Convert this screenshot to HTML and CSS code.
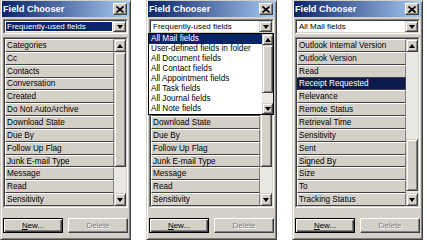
FILE: index.html
```html
<!DOCTYPE html>
<html lang="en">
<head>
  <meta charset="UTF-8">
  <title>Field Chooser</title>
  <link rel="stylesheet" href="styles.css">
</head>
<body>

  <div class="desk">

    <!-- 1: frequently-used fields, combo focused -->
    <div class="win">
      <div class="title">
        <span>Field Chooser</span>
        <span class="close"><svg width="8" height="7" viewBox="0 0 8 7"><path d="M0.5 0.5L7.5 6.5M7.5 0.5L0.5 6.5" stroke="#000" stroke-width="1.7"/></svg></span>
      </div>
      <div class="combo">
        <div class="combo-in">
          <span class="value sel">Frequently-used fields</span>
          <span class="arrow"><i class="tri down"></i></span>
        </div>
      </div>
      <div class="list">
        <div class="list-in">
          <div class="items">
            <div class="item">Categories</div>
            <div class="item">Cc</div>
            <div class="item">Contacts</div>
            <div class="item">Conversation</div>
            <div class="item">Created</div>
            <div class="item">Do Not AutoArchive</div>
            <div class="item">Download State</div>
            <div class="item">Due By</div>
            <div class="item">Follow Up Flag</div>
            <div class="item">Junk E-mail Type</div>
            <div class="item">Message</div>
            <div class="item">Read</div>
            <div class="item">Sensitivity</div>
          </div>
          <div class="sbar">
            <div class="sbtn"><i class="tri up"></i></div>
            <div class="track"><div class="thumb thumb-top"></div></div>
            <div class="sbtn"><i class="tri down"></i></div>
          </div>
        </div>
      </div>
      <div class="btns">
        <button class="btn default"><u>N</u>ew...</button>
        <button class="btn" disabled>Delete</button>
      </div>
    </div>

    <!-- 2: combo dropped down -->
    <div class="win">
      <div class="title">
        <span>Field Chooser</span>
        <span class="close"><svg width="8" height="7" viewBox="0 0 8 7"><path d="M0.5 0.5L7.5 6.5M7.5 0.5L0.5 6.5" stroke="#000" stroke-width="1.7"/></svg></span>
      </div>
      <div class="combo">
        <div class="combo-in">
          <span class="value">Frequently-used fields</span>
          <span class="arrow"><i class="tri down"></i></span>
        </div>
      </div>
      <div class="list">
        <div class="list-in">
          <div class="items">
            <div class="item">Categories</div>
            <div class="item">Cc</div>
            <div class="item">Contacts</div>
            <div class="item">Conversation</div>
            <div class="item">Created</div>
            <div class="item">Do Not AutoArchive</div>
            <div class="item">Download State</div>
            <div class="item">Due By</div>
            <div class="item">Follow Up Flag</div>
            <div class="item">Junk E-mail Type</div>
            <div class="item">Message</div>
            <div class="item">Read</div>
            <div class="item">Sensitivity</div>
          </div>
          <div class="sbar">
            <div class="sbtn"><i class="tri up"></i></div>
            <div class="track"><div class="thumb thumb-top"></div></div>
            <div class="sbtn"><i class="tri down"></i></div>
          </div>
        </div>
      </div>
      <div class="btns">
        <button class="btn default"><u>N</u>ew...</button>
        <button class="btn" disabled>Delete</button>
      </div>

      <div class="dropdown">
        <div class="drop-items">
          <div class="drop-item hi">All Mail fields</div>
          <div class="drop-item">User-defined fields in folder</div>
          <div class="drop-item">All Document fields</div>
          <div class="drop-item">All Contact fields</div>
          <div class="drop-item">All Appointment fields</div>
          <div class="drop-item">All Task fields</div>
          <div class="drop-item">All Journal fields</div>
          <div class="drop-item">All Note fields</div>
        </div>
        <div class="sbar small">
          <div class="sbtn"><i class="tri up"></i></div>
          <div class="track"><div class="thumb thumb-drop"></div></div>
          <div class="sbtn"><i class="tri down"></i></div>
        </div>
      </div>
    </div>

    <!-- 3: all mail fields -->
    <div class="win">
      <div class="title">
        <span>Field Chooser</span>
        <span class="close"><svg width="8" height="7" viewBox="0 0 8 7"><path d="M0.5 0.5L7.5 6.5M7.5 0.5L0.5 6.5" stroke="#000" stroke-width="1.7"/></svg></span>
      </div>
      <div class="combo">
        <div class="combo-in">
          <span class="value">All Mail fields</span>
          <span class="arrow"><i class="tri down"></i></span>
        </div>
      </div>
      <div class="list">
        <div class="list-in">
          <div class="items">
            <div class="item">Outlook Internal Version</div>
            <div class="item">Outlook Version</div>
            <div class="item">Read</div>
            <div class="item picked">Receipt Requested</div>
            <div class="item">Relevance</div>
            <div class="item">Remote Status</div>
            <div class="item">Retrieval Time</div>
            <div class="item">Sensitivity</div>
            <div class="item">Sent</div>
            <div class="item">Signed By</div>
            <div class="item">Size</div>
            <div class="item">To</div>
            <div class="item">Tracking Status</div>
          </div>
          <div class="sbar">
            <div class="sbtn"><i class="tri up"></i></div>
            <div class="track"><div class="thumb thumb-low"></div></div>
            <div class="sbtn"><i class="tri down"></i></div>
          </div>
        </div>
      </div>
      <div class="btns">
        <button class="btn default"><u>N</u>ew...</button>
        <button class="btn" disabled>Delete</button>
      </div>
    </div>

  </div>

</body>
</html>
```

FILE: styles.css
```css
* {
  box-sizing: border-box;
}

body {
  margin: 0;
  background: #fff;
  font-family: "Liberation Sans", Arial, sans-serif;
  font-size: 8px;
  color: #000;
}

.desk {
  display: flex;
  gap: 15px;
}

/* window frame, win2000 classic */
.win {
  position: relative;
  width: 131px;
  height: 240px;
  background: #d4d0c8;
  border: 1px solid;
  border-color: #d4d0c8 #404040 #404040 #d4d0c8;
  box-shadow: inset 1px 1px #fff, inset -1px -1px #808080;
  padding: 0 1px;
  display: flex;
  flex-direction: column;
}

.title {
  height: 16px;
  background: linear-gradient(to right, #0a246a, #a6caf0);
  color: #fff;
  font-weight: bold;
  font-size: 9.2px;
  display: flex;
  align-items: center;
  justify-content: space-between;
  padding: 0 2px 0 1px;
}

.close {
  width: 14px;
  height: 12px;
  background: #d4d0c8;
  border: 1px solid;
  border-color: #fff #404040 #404040 #fff;
  box-shadow: inset -1px -1px #808080;
  display: flex;
  align-items: center;
  justify-content: center;
}

.combo {
  margin: 2px 1px 0;
  height: 15px;
  border: 1px solid;
  border-color: #808080 #fff #fff #808080;
}

.combo-in {
  height: 100%;
  display: flex;
  background: #fff;
  border: 1px solid;
  border-color: #404040 #d4d0c8 #d4d0c8 #404040;
}

.value {
  flex: 1;
  margin: 1px;
  padding-left: 1px;
  display: flex;
  align-items: center;
  white-space: nowrap;
  overflow: hidden;
}

.value.sel {
  background: #0a246a;
  color: #fff;
}

.arrow,
.sbtn {
  background: #d4d0c8;
  border: 1px solid;
  border-color: #d4d0c8 #404040 #404040 #d4d0c8;
  box-shadow: inset 1px 1px #fff, inset -1px -1px #808080;
  display: flex;
  align-items: center;
  justify-content: center;
}

.arrow {
  width: 13px;
}

.tri {
  display: block;
  width: 0;
  height: 0;
  border-left: 3.5px solid transparent;
  border-right: 3.5px solid transparent;
}

.tri.down {
  border-top: 4px solid #000;
}

.tri.up {
  border-bottom: 4px solid #000;
}

.list {
  margin: 3px 1px 0;
  height: 171px;
  border: 1px solid;
  border-color: #808080 #fff #fff #808080;
}

.list-in {
  height: 100%;
  display: flex;
  border: 1px solid;
  border-color: #404040 #d4d0c8 #d4d0c8 #404040;
}

.items {
  flex: 1;
  min-width: 0;
  display: grid;
  grid-template-rows: repeat(13, 1fr);
}

.item {
  background: #d4d0c8;
  border: 1px solid;
  border-color: #fff #808080 #404040 #fff;
  padding-left: 1px;
  display: flex;
  align-items: center;
  white-space: nowrap;
  overflow: hidden;
  font-size: 8.2px;
}

.item.picked {
  background: #0c1a4e;
  color: #fff;
  border-color: #0c1a4e #404040 #404040 #0c1a4e;
}

.sbar {
  width: 12px;
  display: flex;
  flex-direction: column;
}

.sbar .sbtn {
  height: 13px;
}

.track {
  flex: 1;
  background: #eae8e3;
  display: flex;
  flex-direction: column;
}

.thumb {
  background: #d4d0c8;
  border: 1px solid;
  border-color: #d4d0c8 #404040 #404040 #d4d0c8;
  box-shadow: inset 1px 1px #fff, inset -1px -1px #808080;
}

.thumb-top {
  height: 115px;
}

.thumb-low {
  height: 52px;
  margin-top: auto;
  margin-bottom: 2px;
}

.thumb-drop {
  height: 48px;
}

.btns {
  margin: 10px 1px 0;
  display: flex;
  gap: 5px;
}

.btn {
  flex: 1;
  height: 15px;
  padding: 0;
  font-family: inherit;
  font-size: 8px;
  color: #000;
  background: #d4d0c8;
  border: 1px solid;
  border-color: #fff #404040 #404040 #fff;
  box-shadow: inset -1px -1px #808080;
}

.btn.default {
  border-color: #000;
  box-shadow: inset 1px 1px #fff, inset -1px -1px #404040, inset -2px -2px #808080;
}

.btn:disabled {
  color: #808080;
  text-shadow: 1px 1px #fff;
}

/* open combo list */
.dropdown {
  position: absolute;
  top: 32px;
  left: 1px;
  width: 126px;
  height: 82px;
  background: #fff;
  border: 1px solid #000;
  display: flex;
}

.drop-items {
  flex: 1;
  min-width: 0;
}

.drop-item {
  height: 10px;
  line-height: 10px;
  padding-left: 2px;
  font-size: 8.2px;
  white-space: nowrap;
  overflow: hidden;
}

.drop-item.hi {
  background: #0a246a;
  color: #fff;
}

.sbar.small {
  width: 11px;
}

.sbar.small .sbtn {
  height: 11px;
}
```
